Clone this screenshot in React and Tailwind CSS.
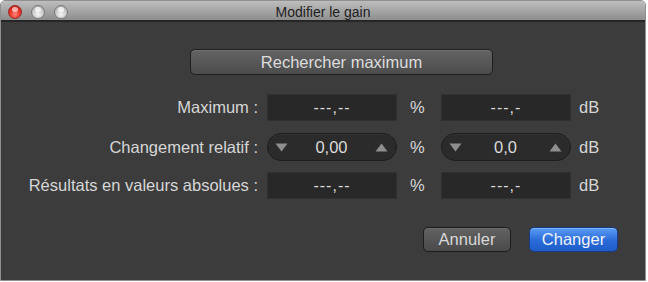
import React from "react";

const font = { fontFamily: '"Liberation Sans", Arial, sans-serif' };

function Light({ red }) {
  return red ? (
    <span className="relative block h-[14px] w-[14px] rounded-full border border-[#9b2a22] bg-[radial-gradient(circle_at_50%_70%,#ff8a7a_0%,#f0382b_45%,#b3140c_100%)]">
      <span className="absolute left-[3px] top-[1px] h-[5px] w-[6px] rounded-full bg-white/60" />
    </span>
  ) : (
    <span className="relative block h-[14px] w-[14px] rounded-full border border-[#7c7c7c] bg-[radial-gradient(circle_at_50%_70%,#f4f4f4_0%,#cfcfcf_45%,#9a9a9a_100%)]">
      <span className="absolute left-[3px] top-[1px] h-[5px] w-[6px] rounded-full bg-white/70" />
    </span>
  );
}

function Field({ value }) {
  return (
    <div className="flex h-[27px] w-[130px] items-center justify-center border border-[#303030] bg-[#282828] text-[16px] tracking-[1px] text-[#dadada]">
      {value}
    </div>
  );
}

function Stepper({ value }) {
  return (
    <div className="flex h-[28px] w-[130px] items-center justify-between rounded-full border border-[#1e1e1e] bg-[#2b2b2b] pl-[7px] pr-[8px] text-[16.5px] text-[#dadada] shadow-[inset_0_1px_0_#333]">
      <svg width="13" height="9" viewBox="0 0 13 9">
        <path d="M0.5 0.5 H12.5 L6.5 8.5 Z" fill="#8e8e8e" />
      </svg>
      <span>{value}</span>
      <svg width="13" height="9" viewBox="0 0 13 9">
        <path d="M0.5 8.5 H12.5 L6.5 0.5 Z" fill="#8e8e8e" />
      </svg>
    </div>
  );
}

function Row({ label, children, mt }) {
  return (
    <div className={`flex items-center ${mt}`}>
      <div className="w-[250px] whitespace-nowrap text-right text-[16.5px] text-[#d6d6d6]">{label}</div>
      <div className="ml-[9px]">{children[0]}</div>
      <div className="w-[44px] pl-[13px] text-[16.5px] text-[#d6d6d6]">%</div>
      <div>{children[1]}</div>
      <div className="ml-[8px] text-[16.5px] text-[#d6d6d6]">dB</div>
    </div>
  );
}

export default function App() {
  return (
    <div className="h-[282px] w-[648px] bg-white" style={font}>
      <div className="flex h-[281px] w-[646px] flex-col overflow-hidden rounded-t-[5px] border border-[#8f8f8f]">
        <div className="relative flex h-[19px] shrink-0 items-center bg-[linear-gradient(#bdbdbd,#8e8e8e)]">
          <div className="flex items-center gap-[9px] pl-[7px] pt-[2px]">
            <Light red />
            <Light />
            <Light />
          </div>
          <div className="absolute inset-x-0 top-[1px] text-center text-[14px] text-[#1e1e1e]">Modifier le gain</div>
        </div>
        <div className="h-[2px] shrink-0 bg-[#262626]" />
        <div className="flex-1 bg-[#3c3c3c] pl-[7px]">
          <button className="ml-[182px] mt-[27px] flex h-[26px] w-[303px] items-center justify-center rounded-[5px] border border-[#1f1f1f] bg-[linear-gradient(#636363,#4c4c4c)] text-[16.5px] text-[#dcdcdc] shadow-[inset_0_1px_0_#707070]">
            Rechercher maximum
          </button>
          <Row label="Maximum :" mt="mt-[19px]">
            <Field value="---,--" />
            <Field value="---,-" />
          </Row>
          <Row label="Changement relatif :" mt="mt-[12px]">
            <Stepper value="0,00" />
            <Stepper value="0,0" />
          </Row>
          <Row label="Résultats en valeurs absolues :" mt="mt-[11px]">
            <Field value="---,--" />
            <Field value="---,-" />
          </Row>
          <div className="mt-[28px] flex justify-end gap-[18px] pr-[27px]">
            <button className="flex h-[25px] w-[88px] items-center justify-center rounded-[5px] border border-[#1c1c1c] bg-[linear-gradient(#626262,#4a4a4a)] text-[16.5px] text-[#d8d8d8] shadow-[inset_0_1px_0_#6e6e6e]">
              Annuler
            </button>
            <button className="flex h-[25px] w-[89px] items-center justify-center rounded-[5px] border border-[#173b85] bg-[linear-gradient(#5b9cf5,#2a6ad8_55%,#1f5cc8)] text-[16.5px] text-[#eef3fb] shadow-[inset_0_1px_0_#7eb3fa]">
              Changer
            </button>
          </div>
        </div>
      </div>
    </div>
  );
}
